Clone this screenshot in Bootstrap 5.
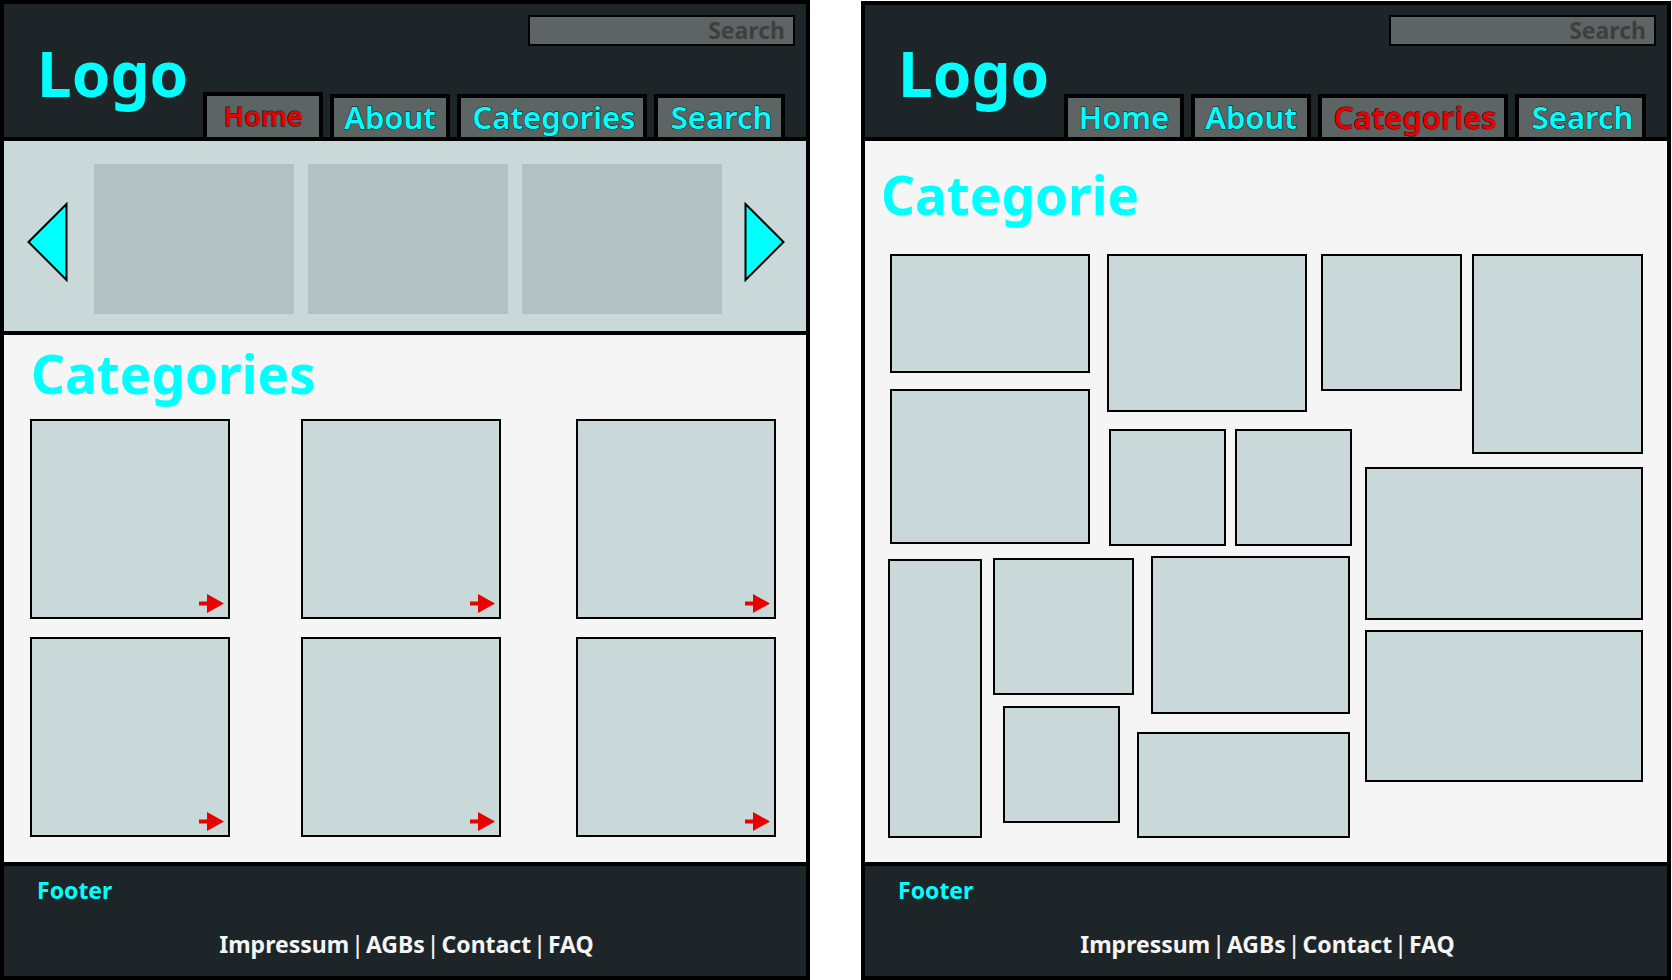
<!DOCTYPE html>
<html lang="en">
<head>
<meta charset="utf-8">
<meta name="viewport" content="width=device-width, initial-scale=1">
<title>Wireframes: Home and Categories</title>
<link href="https://cdn.jsdelivr.net/npm/bootstrap@5.3.0/dist/css/bootstrap.min.css" rel="stylesheet">
<style>
  :root { --ink: #1e2528; --panel: #c9d9d9; --slide: #b3c1c2; --slate: #5c6464; --paper: #f5f5f5; --aqua: #00ffff; --alert: #e90000; }
  body { font-family: "Noto Sans", "Open Sans", sans-serif; background: #fff; color: #000; }
  a { text-decoration: none; }
  .board { gap: 51px; min-height: 100vh; padding-right: 1px; }
  .frame { flex: 1 1 0; min-width: 0; border: 4px solid #000; background: var(--paper); }
  .frame-b { margin-top: 1px; }

  /* header */
  .site-head { background: var(--ink); border-bottom: 4px solid #000; min-height: 137px; padding: 11px 11px 0 33px; }
  .frame-b .site-head { min-height: 136px; padding-top: 10px; }
  .logo { color: var(--aqua); font-size: 62px; line-height: 64px; font-weight: 700; padding-top: 26px; }
  .search-box { width: 267px; height: 31px; background: var(--slate); border: 2px solid #000; border-radius: 0; padding: 0 8px 2px; text-align: right; font-size: 23px; line-height: 24px; font-weight: 700; color: #3f3f3f; }
  .search-box::placeholder { color: #3f3f3f; opacity: 1; }
  .search-box:focus { background: var(--slate); border-color: #000; }
  .tabs { gap: 7px; padding-right: 10px; }
  .tab { border: 4px solid #000; border-bottom: 0; background: var(--slate); color: var(--aqua); height: 43px; font-size: 31px; line-height: 38px; font-weight: 600; text-align: center; white-space: nowrap; -webkit-text-stroke: 1px #111; paint-order: stroke fill; }
  .tab-sm { width: 120px; } .tab-md { width: 131px; padding-left: 4px; } .tab-lg { width: 190px; padding-left: 4px; }
  .tab.active { color: var(--alert); }
  .tab-raised { height: 45px; font-size: 27px; line-height: 40px; }

  /* carousel */
  .strip { background: var(--panel); border-bottom: 4px solid #000; padding: 23px 21px 17px 23px; }
  .slides { gap: 14px; margin: 0 22px 0 26px; }
  .slide-item { flex: 1 1 0; aspect-ratio: 4 / 3; background: var(--slide); }
  .arrow-btn { border: 0; background: none; padding: 6px 0 0; line-height: 0; }

  /* body */
  .page-title { color: var(--aqua); font-size: 53px; line-height: 56px; font-weight: 700; margin: 0; }
  .home-body { padding: 11px 30px 20px 26px; }
  .home-body .page-title { padding-left: 1px; margin-bottom: 17px; }
  .cards { display: grid; grid-template-columns: 200fr 71fr 200fr 75fr 200fr; row-gap: 18px; }
  .cards > :nth-child(3n+1) { grid-column: 1; } .cards > :nth-child(3n+2) { grid-column: 3; } .cards > :nth-child(3n) { grid-column: 5; }
  .cat-tile { aspect-ratio: 1; border: 2px solid #000; background: var(--panel); padding: 4px; }

  /* category mosaic */
  .cat-body { padding: 26px 24px 20px 23px; }
  .cat-body .page-title { margin: 0 0 31px -7px; }
  .mosaic { display: grid; grid-template-columns: 219fr 214fr 44fr 107fr 171fr; grid-template-rows: 174px 39px 89px auto; }
  .tile { border: 2px solid #000; background: var(--panel); }
  .m-left { grid-area: 1 / 1 / 4 / 2; gap: 16px; padding: 0 17px 0 2px; }
  .m-wide { grid-area: 1 / 2 / 2 / 3; height: 158px; margin-right: 14px; }
  .m-box { grid-area: 1 / 3 / 2 / 5; height: 137px; margin-right: 10px; }
  .m-tall { grid-area: 1 / 5 / 3 / 6; height: 200px; }
  .m-pair { grid-area: 2 / 2 / 4 / 4; gap: 9px; padding: 1px 13px 0 2px; }
  .m-right { grid-area: 3 / 4 / 5 / 6; gap: 10px; }
  .m-low { grid-area: 4 / 1 / 5 / 4; display: grid; grid-template-columns: 105fr 144fr 228fr; }
  .low-a { padding: 3px 11px 0 0; } .low-b { gap: 11px; padding: 2px 3px 0 0; } .low-c { gap: 18px; padding-right: 15px; }
  .h-106 { height: 106px; } .h-117 { height: 117px; } .h-119 { height: 119px; } .h-137 { height: 137px; } .h-152 { height: 152px; } .h-153 { height: 153px; } .h-155 { height: 155px; } .h-158 { height: 158px; } .h-279 { height: 279px; }
  .inset-m { margin: 0 14px 0 10px; } .inset-k { margin-left: 14px; }

  /* footer */
  .site-foot { background: var(--ink); border-top: 4px solid #000; padding: 9px 0 13px 33px; font-size: 23px; line-height: 30px; font-weight: 700; min-height: 114px; }
  .foot-title { color: var(--aqua); margin: 0 0 24px; }
  .foot-links { color: var(--paper); padding-right: 30px; gap: 2px; }
  .foot-links a { color: inherit; }
  .foot-links span { font-weight: 500; }
</style>
</head>
<body>
<svg class="d-none" aria-hidden="true">
  <symbol id="go" viewBox="0 0 25 19"><path d="M0 7.500h8V0l17 9.500L8 19v-7.500H0z" fill="#e90000"/></symbol>
</svg>
<div class="board d-flex flex-column flex-lg-row">

  <div class="frame d-flex flex-column">
    <header class="site-head d-flex justify-content-between">
      <a class="logo" href="#">Logo</a>
      <div class="d-flex flex-column justify-content-between align-items-end">
        <input class="form-control search-box" type="text" placeholder="Search" aria-label="Search the site">
        <nav class="tabs d-flex align-items-end" aria-label="Main">
          <a class="tab tab-sm tab-raised active" href="#" aria-current="page">Home</a>
          <a class="tab tab-sm" href="#">About</a>
          <a class="tab tab-lg" href="#">Categories</a>
          <a class="tab tab-md" href="#">Search</a>
        </nav>
      </div>
    </header>
    <section class="strip d-flex align-items-center">
      <button class="arrow-btn" type="button" aria-label="Previous"><svg width="41" height="80" viewBox="0 0 41 80"><path d="M1.500 40 39.500 2v76z" fill="#0ff" stroke="#000" stroke-width="2"/></svg></button>
      <div class="slides d-flex flex-grow-1">
        <div class="slide-item"></div><div class="slide-item"></div><div class="slide-item"></div>
      </div>
      <button class="arrow-btn" type="button" aria-label="Next"><svg width="41" height="80" viewBox="0 0 41 80"><path d="M39.500 40 1.500 2v76z" fill="#0ff" stroke="#000" stroke-width="2"/></svg></button>
    </section>
    <main class="home-body flex-grow-1">
      <h1 class="page-title">Categories</h1>
      <div class="cards">
        <a class="cat-tile d-flex justify-content-end align-items-end" href="#" aria-label="Category 1"><svg width="25" height="19"><use href="#go"/></svg></a>
        <a class="cat-tile d-flex justify-content-end align-items-end" href="#" aria-label="Category 2"><svg width="25" height="19"><use href="#go"/></svg></a>
        <a class="cat-tile d-flex justify-content-end align-items-end" href="#" aria-label="Category 3"><svg width="25" height="19"><use href="#go"/></svg></a>
        <a class="cat-tile d-flex justify-content-end align-items-end" href="#" aria-label="Category 4"><svg width="25" height="19"><use href="#go"/></svg></a>
        <a class="cat-tile d-flex justify-content-end align-items-end" href="#" aria-label="Category 5"><svg width="25" height="19"><use href="#go"/></svg></a>
        <a class="cat-tile d-flex justify-content-end align-items-end" href="#" aria-label="Category 6"><svg width="25" height="19"><use href="#go"/></svg></a>
      </div>
    </main>
    <footer class="site-foot">
      <p class="foot-title">Footer</p>
      <div class="foot-links d-flex justify-content-center">
        <a href="#">Impressum</a><span>|</span><a href="#">AGBs</a><span>|</span><a href="#">Contact</a><span>|</span><a href="#">FAQ</a>
      </div>
    </footer>
  </div>

  <div class="frame frame-b d-flex flex-column">
    <header class="site-head d-flex justify-content-between">
      <a class="logo" href="#">Logo</a>
      <div class="d-flex flex-column justify-content-between align-items-end">
        <input class="form-control search-box" type="text" placeholder="Search" aria-label="Search the site">
        <nav class="tabs d-flex align-items-end" aria-label="Main">
          <a class="tab tab-sm" href="#">Home</a>
          <a class="tab tab-sm" href="#">About</a>
          <a class="tab tab-lg active" href="#" aria-current="page">Categories</a>
          <a class="tab tab-md" href="#">Search</a>
        </nav>
      </div>
    </header>
    <main class="cat-body flex-grow-1">
      <h1 class="page-title">Categorie</h1>
      <div class="mosaic">
        <div class="m-left d-flex flex-column"><div class="tile h-119"></div><div class="tile h-155"></div></div>
        <div class="tile m-wide"></div>
        <div class="tile m-box"></div>
        <div class="tile m-tall"></div>
        <div class="m-pair d-flex"><div class="tile h-117 flex-fill"></div><div class="tile h-117 flex-fill"></div></div>
        <div class="m-right d-flex flex-column"><div class="tile h-153"></div><div class="tile h-152"></div></div>
        <div class="m-low">
          <div class="low-a"><div class="tile h-279"></div></div>
          <div class="low-b d-flex flex-column"><div class="tile h-137"></div><div class="tile h-117 inset-m"></div></div>
          <div class="low-c d-flex flex-column"><div class="tile h-158 inset-k"></div><div class="tile h-106"></div></div>
        </div>
      </div>
    </main>
    <footer class="site-foot">
      <p class="foot-title">Footer</p>
      <div class="foot-links d-flex justify-content-center">
        <a href="#">Impressum</a><span>|</span><a href="#">AGBs</a><span>|</span><a href="#">Contact</a><span>|</span><a href="#">FAQ</a>
      </div>
    </footer>
  </div>
</div>
<script src="https://cdn.jsdelivr.net/npm/bootstrap@5.3.0/dist/js/bootstrap.bundle.min.js"></script>
</body>
</html>
